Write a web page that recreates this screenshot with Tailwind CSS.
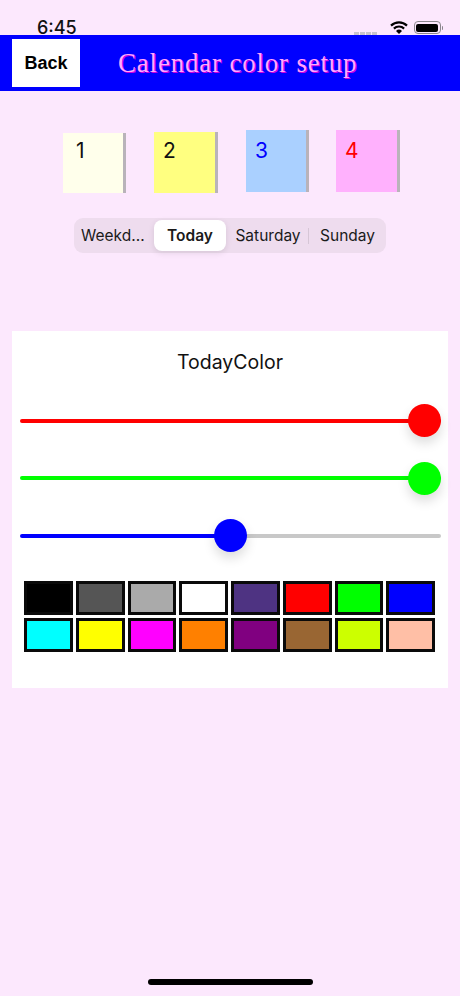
<!doctype html>
<html>
<head>
<meta charset="utf-8" />
<script src="https://cdn.jsdelivr.net/npm/@tailwindcss/browser@4"></script>
</head>
<body class="w-[460px] h-[996px] overflow-hidden bg-[#fce8fd] font-['Inter','Liberation_Sans',sans-serif] text-black relative">
  <!-- status bar -->
  <div class="h-[35px] flex items-start justify-between pl-[37px] pr-[17px] pt-[21px]">
    <span class="text-[18px] leading-[14px] font-medium text-[#111]">6:45</span>
    <div class="flex items-start gap-[6px] h-[14px] overflow-hidden">
      <div class="flex gap-[1px] pt-[11px] pr-[7px]">
        <span class="w-[5px] h-[3px] bg-[#c9c3cc]"></span>
        <span class="w-[5px] h-[3px] bg-[#c9c3cc]"></span>
        <span class="w-[5px] h-[3px] bg-[#c9c3cc]"></span>
        <span class="w-[5px] h-[3px] bg-[#c9c3cc]"></span>
      </div>
      <svg width="18" height="13" viewBox="0 0 18 13">
        <path d="M1 4.6a11.5 11.5 0 0 1 16 0" fill="none" stroke="#000" stroke-width="2.2" />
        <path d="M3.9 7.6a7.3 7.3 0 0 1 10.2 0" fill="none" stroke="#000" stroke-width="2.2" />
        <path d="M9 13 6 9.9a4.3 4.3 0 0 1 6 0z" fill="#000" />
      </svg>
      <div class="flex items-center">
        <div class="w-[27px] h-[13px] rounded-[4px] border border-[#8a868c] p-[1.5px]">
          <div class="w-full h-full rounded-[2px] bg-black"></div>
        </div>
        <span class="w-[1.5px] h-[4px] bg-[#8a868c] ml-[1px] rounded-r"></span>
      </div>
    </div>
  </div>

  <!-- header -->
  <div class="h-[56px] bg-[#0000ff] flex items-center pl-[12px]">
    <button class="w-[68px] h-[48px] bg-white text-[18px] font-bold text-black font-['Liberation_Sans',sans-serif]">Back</button>
    <h1 class="ml-[38px] font-['Liberation_Serif',serif] text-[27px] leading-none tracking-[0.8px] whitespace-nowrap text-[#ffa8ff] [text-shadow:1px_1px_0_#d000e0]">Calendar color setup</h1>
  </div>

  <!-- day cards -->
  <div class="h-[127px] relative">
    <div class="absolute left-[63px] top-[42px] w-[63px] h-[60px] bg-[#ffffeb] border-r-[3px] border-[#b9b3ba] pl-[13px] pt-[5px] text-[21px] leading-[26px] text-[#111]">1</div>
    <div class="absolute left-[154px] top-[41px] w-[64px] h-[61px] bg-[#ffff80] border-r-[3px] border-[#b9b3ba] pl-[9px] pt-[6px] text-[21px] leading-[26px] text-[#111]">2</div>
    <div class="absolute left-[246px] top-[39px] w-[63px] h-[62px] bg-[#aad0ff] border-r-[3px] border-[#b9b3ba] pl-[9px] pt-[8px] text-[21px] leading-[26px] text-[#0000ff]">3</div>
    <div class="absolute left-[336px] top-[39px] w-[64px] h-[62px] bg-[#ffb1fd] border-r-[3px] border-[#b9b3ba] pl-[9px] pt-[8px] text-[21px] leading-[26px] text-[#ff0000]">4</div>
  </div>

  <!-- segmented control -->
  <div class="ml-[74px] w-[312px] h-[35px] rounded-[9px] bg-[#eedcee] flex items-center text-[15.5px] text-[#1a1a1a] relative">
    <span class="w-[78px] pl-[7px] whitespace-nowrap">Weekd...</span>
    <span class="w-[72px] h-[31px] ml-[2px] rounded-[8px] bg-white shadow-[0_2px_6px_rgba(0,0,0,0.1)] flex items-center justify-center font-semibold">Today</span>
    <span class="w-[82px] text-center whitespace-nowrap pl-[2px]">Saturday</span>
    <span class="w-px h-[16px] bg-[#d6c6d6]"></span>
    <span class="w-[77px] text-center whitespace-nowrap">Sunday</span>
  </div>

  <!-- colour panel -->
  <div class="ml-[12px] mt-[78px] w-[436px] h-[357px] bg-white flex flex-col">
    <div class="pt-[19px] text-center text-[19.5px] leading-[24px] text-[#111]">TodayColor</div>

    <div class="ml-[8px] w-[421px] mt-[30px] flex flex-col gap-[24.5px]">
      <div class="relative h-[33px] flex items-center">
        <div class="w-full h-[4px] rounded-full bg-[#ff0000]"></div>
        <div class="absolute right-0 top-0 w-[33px] h-[33px] rounded-full bg-[#ff0000] shadow-[0_6px_12px_rgba(0,0,0,0.14)]"></div>
      </div>
      <div class="relative h-[33px] flex items-center">
        <div class="w-full h-[4px] rounded-full bg-[#00ff00]"></div>
        <div class="absolute right-0 top-0 w-[33px] h-[33px] rounded-full bg-[#00ff00] shadow-[0_6px_12px_rgba(0,0,0,0.14)]"></div>
      </div>
      <div class="relative h-[33px] flex items-center">
        <div class="w-[200px] h-[4px] rounded-l-full bg-[#0000ff]"></div>
        <div class="flex-1 h-[4px] rounded-r-full bg-[#c8c8c8]"></div>
        <div class="absolute left-[194px] top-0 w-[33px] h-[33px] rounded-full bg-[#0000ff] shadow-[0_6px_12px_rgba(0,0,0,0.14)]"></div>
      </div>
    </div>

    <div class="ml-[12px] mt-[29px] w-[411px] grid grid-cols-8 gap-x-[3px] gap-y-[3px]">
      <div class="h-[34px] border-[3px] border-[#0a0a0a] bg-[#000000]"></div>
      <div class="h-[34px] border-[3px] border-[#0a0a0a] bg-[#555555]"></div>
      <div class="h-[34px] border-[3px] border-[#0a0a0a] bg-[#aaaaaa]"></div>
      <div class="h-[34px] border-[3px] border-[#0a0a0a] bg-[#ffffff]"></div>
      <div class="h-[34px] border-[3px] border-[#0a0a0a] bg-[#4e3382]"></div>
      <div class="h-[34px] border-[3px] border-[#0a0a0a] bg-[#ff0000]"></div>
      <div class="h-[34px] border-[3px] border-[#0a0a0a] bg-[#00ff00]"></div>
      <div class="h-[34px] border-[3px] border-[#0a0a0a] bg-[#0000ff]"></div>
      <div class="h-[34px] border-[3px] border-[#0a0a0a] bg-[#00ffff]"></div>
      <div class="h-[34px] border-[3px] border-[#0a0a0a] bg-[#ffff00]"></div>
      <div class="h-[34px] border-[3px] border-[#0a0a0a] bg-[#ff00ff]"></div>
      <div class="h-[34px] border-[3px] border-[#0a0a0a] bg-[#ff8000]"></div>
      <div class="h-[34px] border-[3px] border-[#0a0a0a] bg-[#800080]"></div>
      <div class="h-[34px] border-[3px] border-[#0a0a0a] bg-[#996633]"></div>
      <div class="h-[34px] border-[3px] border-[#0a0a0a] bg-[#ccff00]"></div>
      <div class="h-[34px] border-[3px] border-[#0a0a0a] bg-[#ffbfa6]"></div>
    </div>
  </div>

  <!-- home indicator -->
  <div class="absolute left-[148px] top-[979px] w-[165px] h-[6px] rounded-full bg-black"></div>
</body>
</html>
